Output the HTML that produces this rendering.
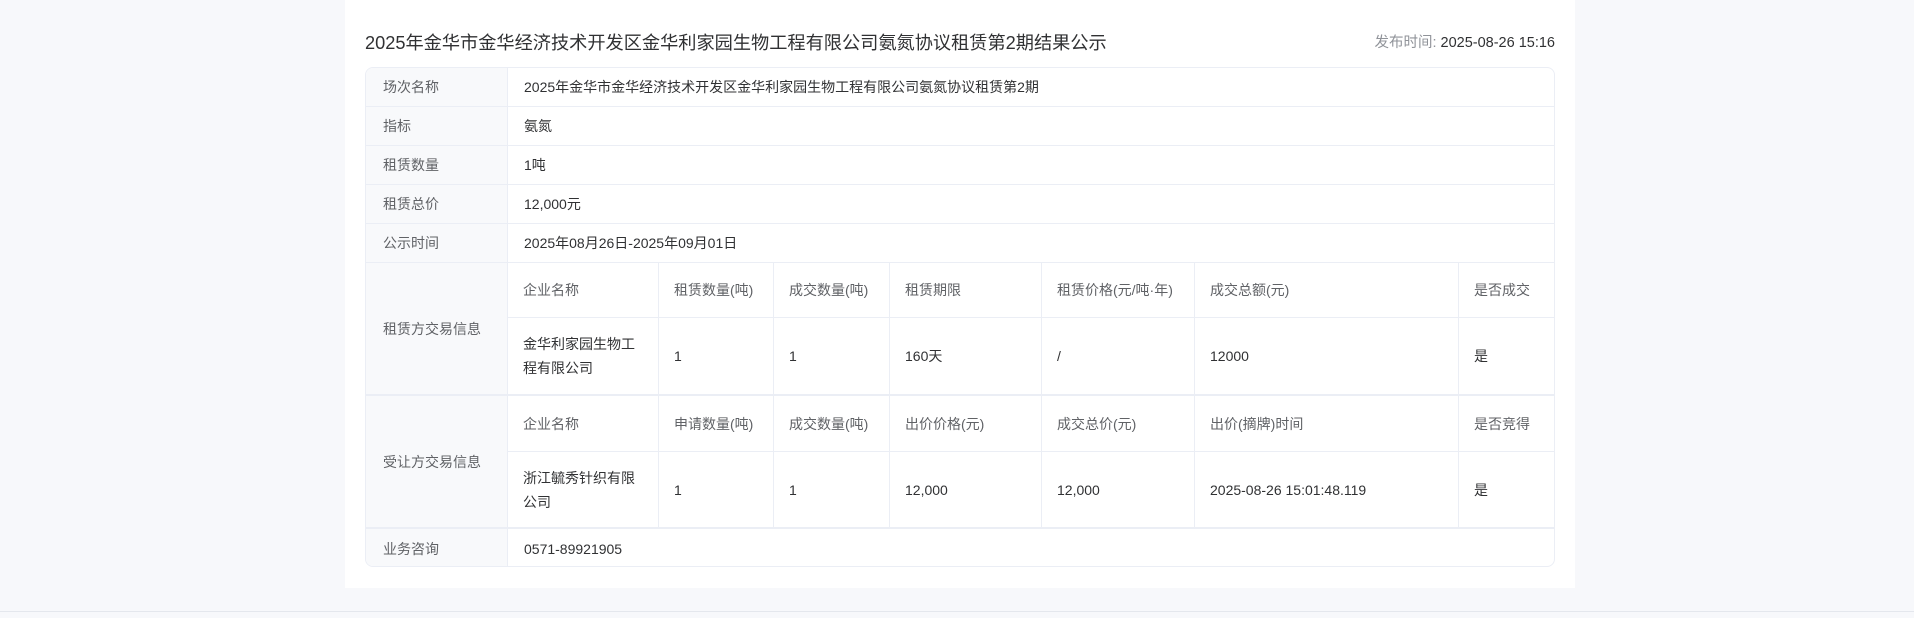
<!DOCTYPE html>
<html><head><meta charset="utf-8"><style>
*{margin:0;padding:0;box-sizing:border-box}
body{width:1914px;height:618px;background:#f7f8fb;font-family:"Liberation Sans","Noto Sans CJK SC",sans-serif;position:relative;overflow:hidden;color:#303133}
.panel{position:absolute;left:345px;top:0;width:1230px;height:588px;background:#fff}
.bline{position:absolute;left:0;top:611px;width:1914px;height:1px;background:#e4e7ed}
.title{position:absolute;left:365px;top:31px;font-size:18.2px;color:#303133;line-height:24px;white-space:nowrap}
.pub{position:absolute;right:359px;top:33px;font-size:14.5px;line-height:20px;color:#303133;white-space:nowrap}
.pub span{color:#909399}
.tbl{position:absolute;left:365px;top:67px;width:1190px;height:500px;border:1px solid #ebeef5;border-radius:8px;overflow:hidden}
.c{position:absolute;font-size:14px;display:flex;align-items:center;border-bottom:1px solid #ebeef5;line-height:22px}
.lab{left:0;width:142px;background:#f8f9fb;color:#606266;padding-left:17px;border-right:1px solid #ebeef5}
.val{left:142px;right:0;padding-left:16px;color:#303133}
.s{position:absolute;font-size:14px;display:flex;align-items:center;padding-left:15px;border-right:1px solid #ebeef5;border-bottom:1px solid #ebeef5;line-height:24px}
.h{color:#606266}
.d{color:#303133}
</style></head><body>
<div class="panel"></div>
<div class="bline"></div>
<div class="title">2025年金华市金华经济技术开发区金华利家园生物工程有限公司氨氮协议租赁第2期结果公示</div>
<div class="pub"><span>发布时间:</span> 2025-08-26 15:16</div>
<div class="tbl">
<div class="c lab" style="top:0;height:39px">场次名称</div><div class="c val" style="top:0;height:39px">2025年金华市金华经济技术开发区金华利家园生物工程有限公司氨氮协议租赁第2期</div>
<div class="c lab" style="top:39px;height:39px">指标</div><div class="c val" style="top:39px;height:39px">氨氮</div>
<div class="c lab" style="top:78px;height:39px">租赁数量</div><div class="c val" style="top:78px;height:39px">1吨</div>
<div class="c lab" style="top:117px;height:39px">租赁总价</div><div class="c val" style="top:117px;height:39px">12,000元</div>
<div class="c lab" style="top:156px;height:39px">公示时间</div><div class="c val" style="top:156px;height:39px">2025年08月26日-2025年09月01日</div>
<div class="c lab" style="top:195px;height:133px;border-bottom-width:2px">租赁方交易信息</div>
<div class="c lab" style="top:328px;height:133px;border-bottom-width:2px">受让方交易信息</div>
<div class="c lab" style="top:461px;height:39px;border-bottom:none">业务咨询</div><div class="c val" style="top:461px;height:39px;border-bottom:none">0571-89921905</div>

<div class="s h" style="top:195px;left:142px;width:151px;height:55px">企业名称</div>
<div class="s h" style="top:195px;left:293px;width:115px;height:55px">租赁数量(吨)</div>
<div class="s h" style="top:195px;left:408px;width:116px;height:55px">成交数量(吨)</div>
<div class="s h" style="top:195px;left:524px;width:152px;height:55px">租赁期限</div>
<div class="s h" style="top:195px;left:676px;width:153px;height:55px">租赁价格(元/吨·年)</div>
<div class="s h" style="top:195px;left:829px;width:264px;height:55px">成交总额(元)</div>
<div class="s h" style="top:195px;left:1093px;width:96px;height:55px">是否成交</div>
<div class="s d" style="top:250px;left:142px;width:151px;height:78px;border-bottom-width:2px">金华利家园生物工<br>程有限公司</div>
<div class="s d" style="top:250px;left:293px;width:115px;height:78px;border-bottom-width:2px">1</div>
<div class="s d" style="top:250px;left:408px;width:116px;height:78px;border-bottom-width:2px">1</div>
<div class="s d" style="top:250px;left:524px;width:152px;height:78px;border-bottom-width:2px">160天</div>
<div class="s d" style="top:250px;left:676px;width:153px;height:78px;border-bottom-width:2px">/</div>
<div class="s d" style="top:250px;left:829px;width:264px;height:78px;border-bottom-width:2px">12000</div>
<div class="s d" style="top:250px;left:1093px;width:96px;height:78px;border-bottom-width:2px">是</div>

<div class="s h" style="top:328px;left:142px;width:151px;height:56px">企业名称</div>
<div class="s h" style="top:328px;left:293px;width:115px;height:56px">申请数量(吨)</div>
<div class="s h" style="top:328px;left:408px;width:116px;height:56px">成交数量(吨)</div>
<div class="s h" style="top:328px;left:524px;width:152px;height:56px">出价价格(元)</div>
<div class="s h" style="top:328px;left:676px;width:153px;height:56px">成交总价(元)</div>
<div class="s h" style="top:328px;left:829px;width:264px;height:56px">出价(摘牌)时间</div>
<div class="s h" style="top:328px;left:1093px;width:96px;height:56px">是否竞得</div>
<div class="s d" style="top:384px;left:142px;width:151px;height:77px;border-bottom-width:2px">浙江毓秀针织有限<br>公司</div>
<div class="s d" style="top:384px;left:293px;width:115px;height:77px;border-bottom-width:2px">1</div>
<div class="s d" style="top:384px;left:408px;width:116px;height:77px;border-bottom-width:2px">1</div>
<div class="s d" style="top:384px;left:524px;width:152px;height:77px;border-bottom-width:2px">12,000</div>
<div class="s d" style="top:384px;left:676px;width:153px;height:77px;border-bottom-width:2px">12,000</div>
<div class="s d" style="top:384px;left:829px;width:264px;height:77px;border-bottom-width:2px">2025-08-26 15:01:48.119</div>
<div class="s d" style="top:384px;left:1093px;width:96px;height:77px;border-bottom-width:2px">是</div>
</div>
</body></html>
